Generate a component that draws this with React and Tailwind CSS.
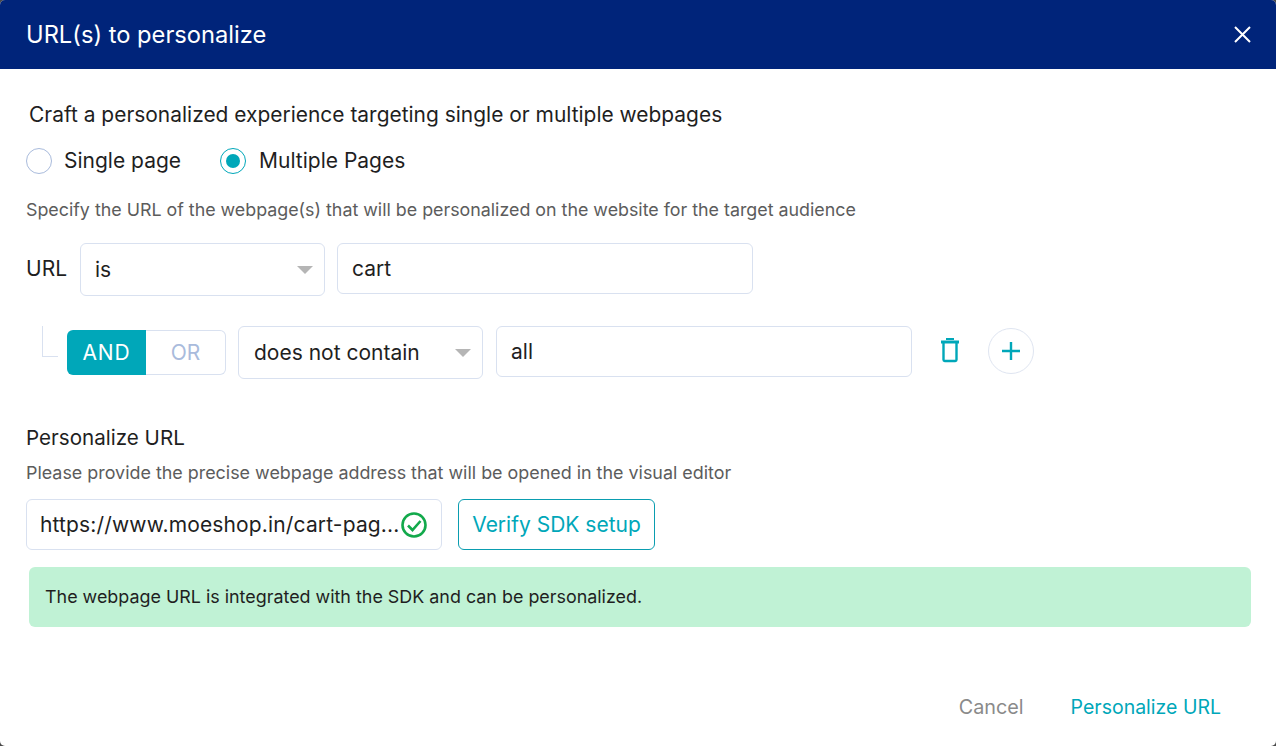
function Caret() {
  return <span className="ml-auto h-0 w-0 border-x-[8px] border-t-[8px] border-x-transparent border-t-[#b5b5b5]" />;
}

function SelectBox({ value, className }) {
  return (
    <div className={`flex items-center rounded-[6px] border border-[#d9e1f0] bg-white text-[21px] text-[#1f1f1f] ${className}`}>
      <span>{value}</span>
      <Caret />
    </div>
  );
}

function TextBox({ value, className }) {
  return (
    <div className={`flex items-center rounded-[6px] border border-[#d9e1f0] bg-white pl-[14px] text-[21px] text-[#1f1f1f] ${className}`}>
      {value}
    </div>
  );
}

export default function App() {
  return (
    <div className="h-[746px] w-[1276px] overflow-hidden bg-[#4a4a4a]">
      <div className="h-full overflow-hidden rounded-[5px] bg-white font-['Inter',sans-serif] text-[#1f1f1f]">
        <div className="flex h-[69px] items-center justify-between bg-[#00247a] pl-[26px] pr-[25px] text-white">
          <h1 className="text-[23.7px]">URL(s) to personalize</h1>
          <svg viewBox="0 0 17 17" className="h-[17px] w-[17px]" fill="none" stroke="white" strokeWidth="2">
            <path d="M1 1l15 15M16 1L1 16" />
          </svg>
        </div>

        <div className="px-[26px]">
          <p className="mt-[33px] pl-[3px] text-[20.95px] leading-[26px]">Craft a personalized experience targeting single or multiple webpages</p>

          <div className="mt-[13px] flex h-[40px] items-center">
            <span className="h-[26px] w-[26px] rounded-full border border-[#a9bbdc]" />
            <span className="ml-[12px] text-[21px]">Single page</span>
            <span className="ml-[39px] flex h-[26px] w-[26px] items-center justify-center rounded-full border border-[#00a7b9]">
              <span className="h-[14px] w-[14px] rounded-full bg-[#00a7b9]" />
            </span>
            <span className="ml-[13px] text-[21px]">Multiple Pages</span>
          </div>

          <p className="mt-[18px] text-[17.84px] leading-[22px] text-[#5c5c5c]">Specify the URL of the webpage(s) that will be personalized on the website for the target audience</p>

          <div className="mt-[22px] flex items-start">
            <span className="mt-[12px] w-[41px] text-[21px] leading-[28px]">URL</span>
            <SelectBox value="is" className="ml-[13px] h-[53px] w-[245px] pl-[14px] pr-[11px]" />
            <TextBox value="cart" className="ml-[12px] h-[51px] w-[416px]" />
          </div>

          <div className="mt-[30px] flex h-[53px] items-center">
            <span className="mb-[22px] ml-[16px] h-[31px] w-[16px] border-b border-l border-[#d9e1f0]" />
            <div className="ml-[9px] flex h-[45px] w-[159px] text-[21px]">
              <span className="flex w-[79px] items-center justify-center rounded-l-[6px] bg-[#00a7b9] tracking-[0.8px] text-white">AND</span>
              <span className="flex w-[80px] items-center justify-center rounded-r-[6px] border-y border-r border-[#d9e1f0] text-[#a9bbdc]">OR</span>
            </div>
            <SelectBox value="does not contain" className="ml-[12px] h-[53px] w-[245px] pl-[15px] pr-[11px]" />
            <TextBox value="all" className="ml-[13px] h-[51px] w-[416px] self-start" />
            <svg viewBox="0 0 20 26" className="mb-[5px] ml-[28px] h-[26px] w-[20px]" fill="none" stroke="#00a7b9" strokeWidth="2.4">
              <path d="M1 5h18" strokeWidth="3" />
              <path d="M7 3V2h6v1" strokeWidth="2" />
              <path d="M3.5 6v16.8c0 .8.5 1.2 1.2 1.2h10.6c.7 0 1.2-.4 1.2-1.2V6" />
            </svg>
            <span className="mb-[3px] ml-[28px] flex h-[46px] w-[46px] items-center justify-center rounded-full border border-[#dfe5f1]">
              <svg viewBox="0 0 20 20" className="h-[20px] w-[20px]" stroke="#00a7b9" strokeWidth="2.4">
                <path d="M10 1v18M1 10h18" />
              </svg>
            </span>
          </div>

          <h2 className="mt-[46px] text-[20.6px] leading-[26px]">Personalize URL</h2>
          <p className="mt-[11px] text-[17.9px] leading-[22px] text-[#5c5c5c]">Please provide the precise webpage address that will be opened in the visual editor</p>

          <div className="mt-[15px] flex h-[51px] items-center">
            <div className="flex h-[51px] w-[416px] items-center justify-between rounded-[6px] border border-[#d9e1f0] pl-[13px] pr-[14px] text-[21px]">
              <span className="whitespace-nowrap tracking-[0.15px]">https://www.moeshop.in/cart-pag...</span>
              <svg viewBox="0 0 26 26" className="h-[26px] w-[26px] shrink-0" fill="none" stroke="#12a94b" strokeWidth="2.6">
                <circle cx="13" cy="13" r="11.5" />
                <path d="M7 13.5l4.5 4.5L19.5 9" />
              </svg>
            </div>
            <button type="button" className="ml-[16px] h-[51px] w-[197px] rounded-[6px] border border-[#0a9db0] text-[21px] text-[#00a7b9]">Verify SDK setup</button>
          </div>

          <div className="ml-[3px] mt-[17px] flex h-[60px] w-[1222px] items-center rounded-[6px] bg-[#c0f2d5] pl-[16px] text-[17.9px]">
            The webpage URL is integrated with the SDK and can be personalized.
          </div>

          <div className="mt-[62px] flex items-center justify-end pr-[29px] text-[19.5px] leading-[36px]">
            <span className="text-[19.8px] text-[#8a8a8a]">Cancel</span>
            <span className="ml-[47px] text-[#00a7b9]">Personalize URL</span>
          </div>
        </div>
      </div>
    </div>
  );
}
